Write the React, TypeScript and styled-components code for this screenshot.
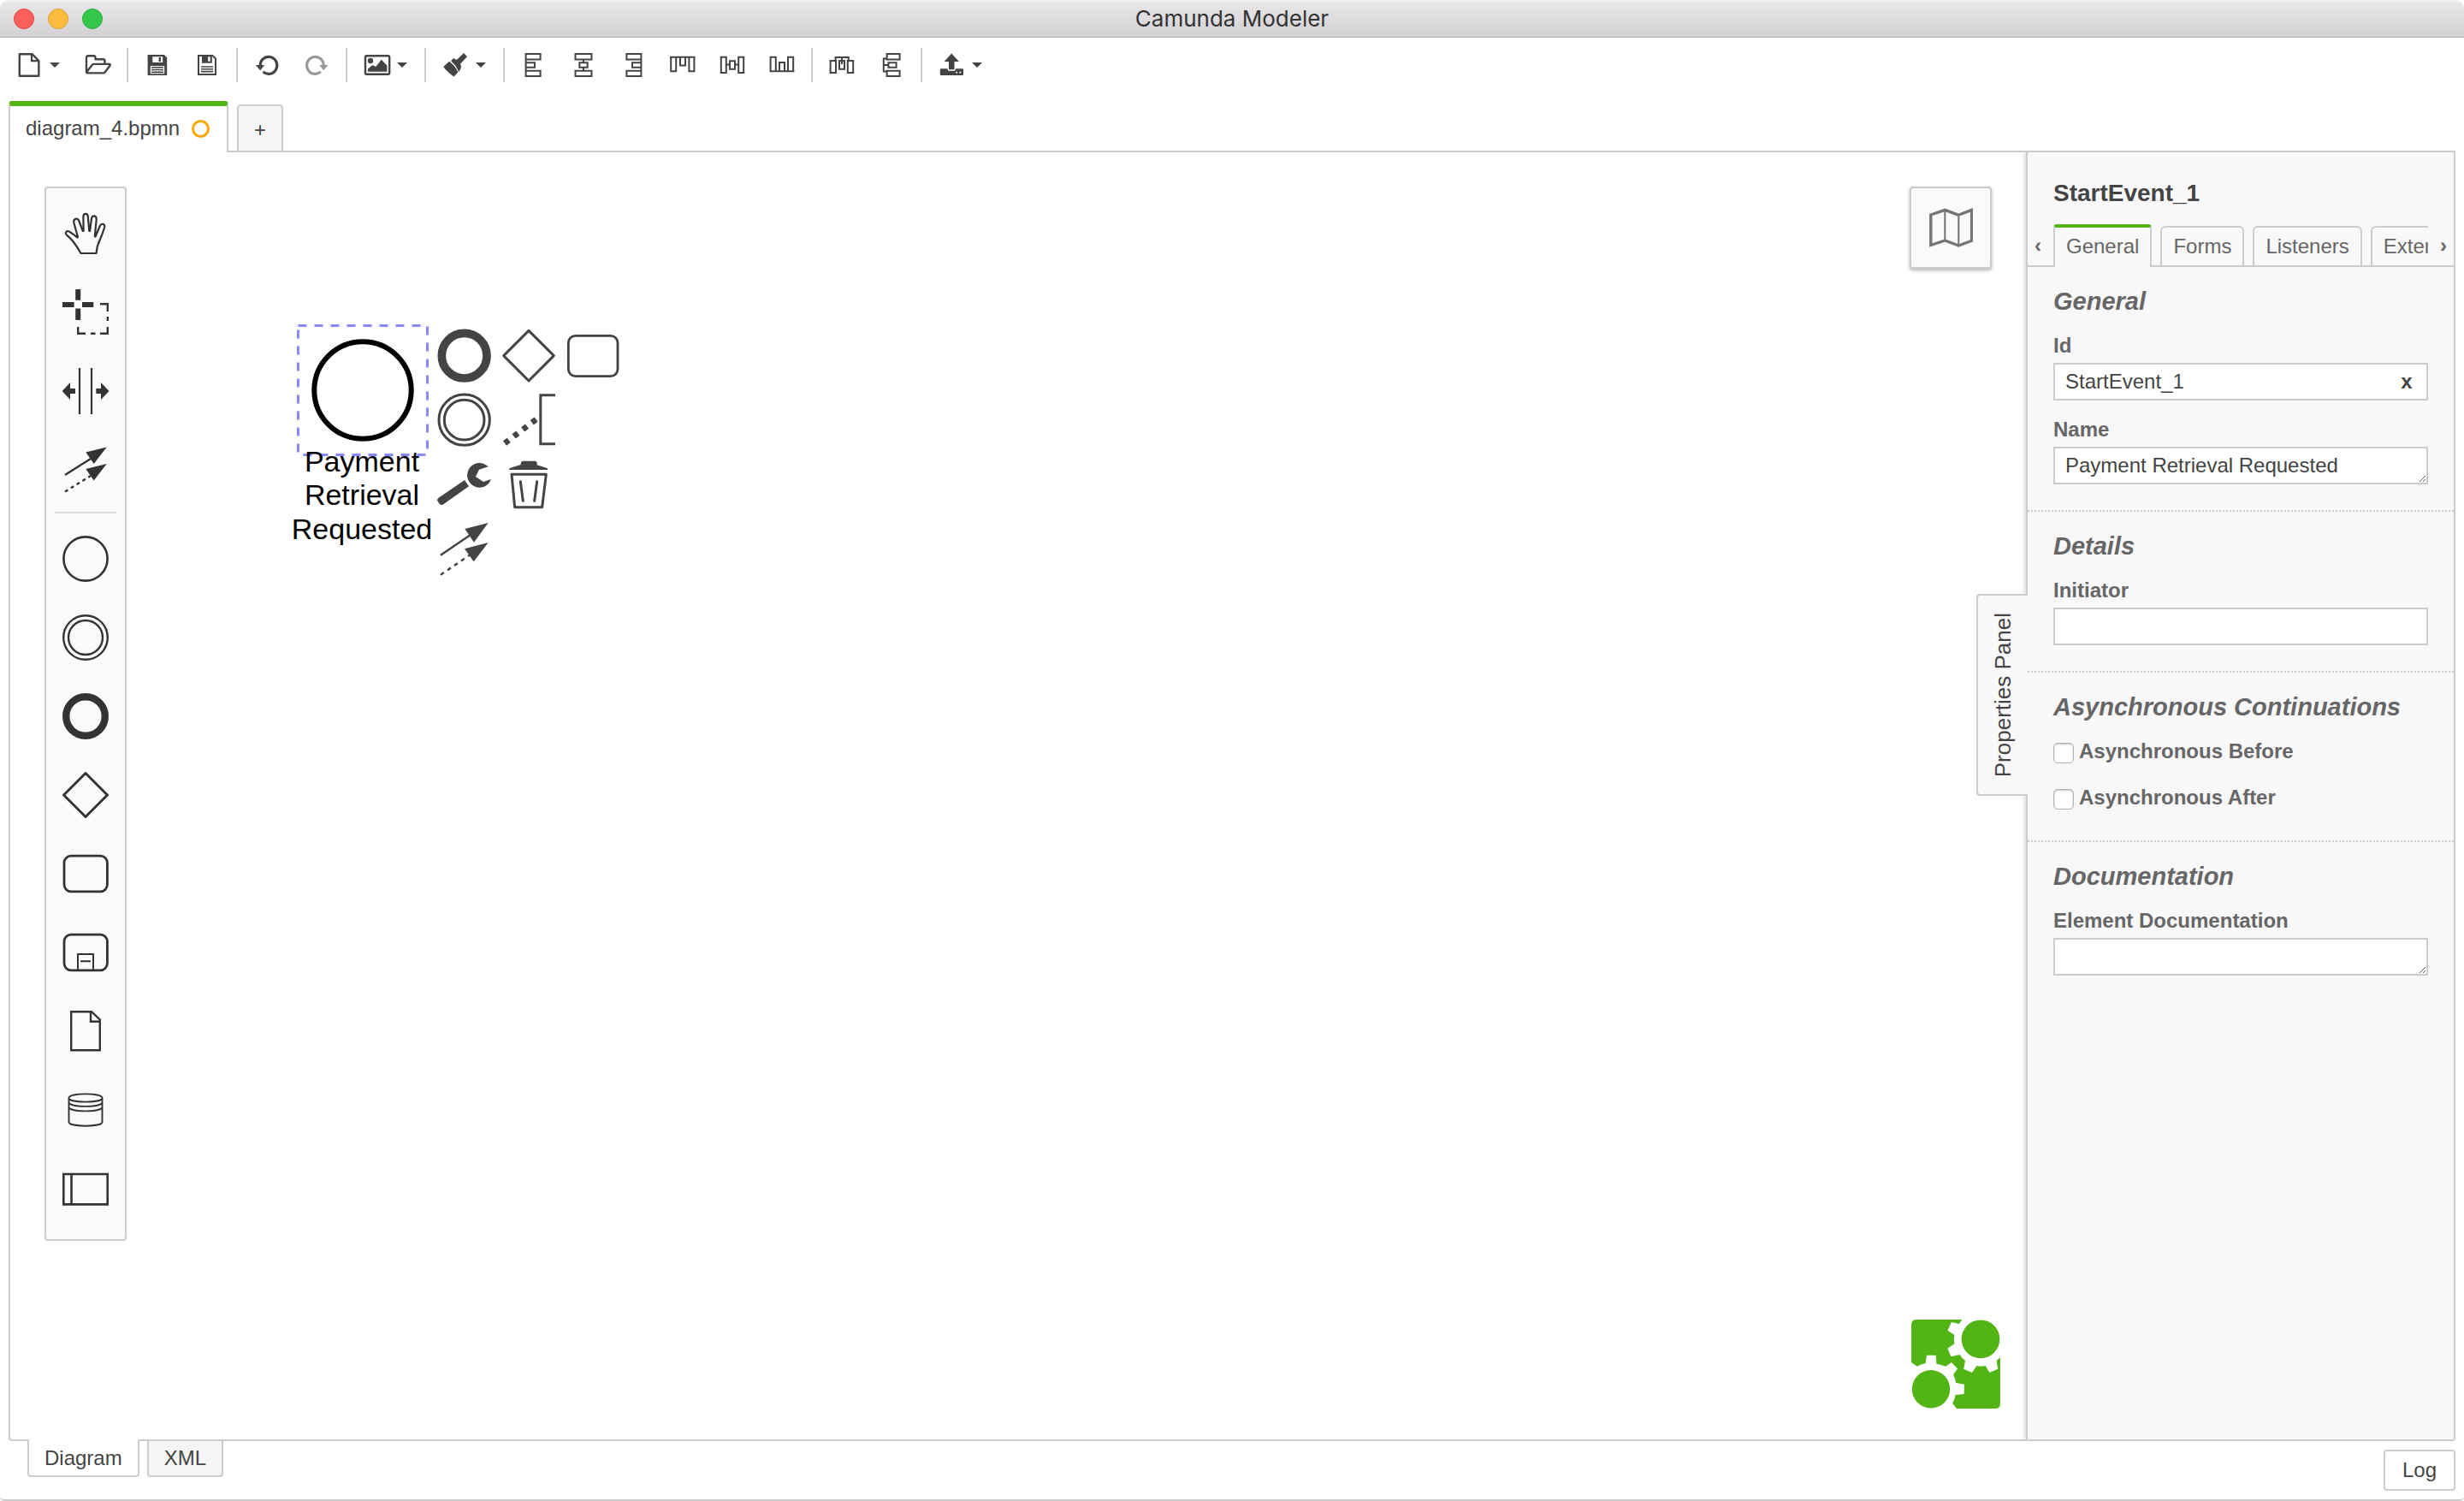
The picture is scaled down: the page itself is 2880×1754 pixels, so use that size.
import React, { useState } from 'react';
import styled, { createGlobalStyle, css } from 'styled-components';

const green = '#52b415';
const line = '#cccccc';
const ink = '#444444';
const muted = '#666666';
const panelBg = '#f8f8f8';
const sans = "'Liberation Sans', Arial, Helvetica, sans-serif";

const GlobalStyle = createGlobalStyle`
  *, *::before, *::after { box-sizing: border-box; }
  body { margin: 0; background: #ffffff; }
  button, input, textarea { font: inherit; color: inherit; margin: 0; padding: 0; border: 0; background: none; }
`;

const Window = styled.div`
  display: flex;
  flex-direction: column;
  height: 100vh;
  font: 24px/28px ${sans};
  color: ${ink};
  border-bottom: 2px solid ${line};
  border-radius: 10px 10px 5px 5px;
  overflow: hidden;
`;

/* ---------- title bar ---------- */

const TitleBar = styled.header`
  display: grid;
  grid-template-columns: 1fr auto 1fr;
  align-items: center;
  height: 44px;
  padding: 0 16px;
  background: linear-gradient(#f4f3f4, #e8e6e9 3px, #d2d0d3);
  border-bottom: 1px solid #b1afb2;
`;

const Lights = styled.div`
  display: flex;
  gap: 16px;
`;

const Light = styled.button<{ $fill: string; $edge: string }>`
  width: 24px;
  height: 24px;
  border-radius: 50%;
  background: ${(p) => p.$fill};
  border: 1px solid ${(p) => p.$edge};
`;

const Title = styled.h1`
  margin: 0;
  padding-top: 1px;
  font: 400 26px/32px Inter, ${sans};
  color: #333333;
`;

/* ---------- toolbar ---------- */

const Toolbar = styled.div`
  display: flex;
  padding: 12px 0 22px;
`;

const ToolGroup = styled.div`
  display: flex;
  height: 40px;
  padding: 0 5px;
  border-right: 2px solid ${line};
  &:last-child { border-right: 0; }
`;

const ToolButton = styled.button`
  display: flex;
  align-items: center;
  gap: 8px;
  padding: 0 13px;
  color: ${ink};
  &:disabled { color: #999999; }
`;

const DropButton = styled(ToolButton)`
  padding-right: 15px;
`;

const ToolSvg = styled.svg`
  width: 32px;
  height: 32px;
  overflow: visible;
  fill: none;
  stroke: currentColor;
  stroke-width: 2;
`;

const CaretSvg = styled.svg`
  width: 12px;
  height: 6px;
  fill: currentColor;
`;

const Caret = () => (
  <CaretSvg viewBox="0 0 12 6"><path d="M0 0H12L6 6Z" /></CaretSvg>
);

type Tool = { name: string; art: React.ReactNode; drop?: boolean; disabled?: boolean };

const solid = { fill: 'currentColor', stroke: 'none' };

const toolGroups: Tool[][] = [
  [
    {
      name: 'New', drop: true, art: (
        <>
          <path strokeWidth="2.4" strokeLinejoin="round" d="M4.8 3.2H19.5L27.3 11V28.8H4.8Z" />
          <path strokeWidth="2.2" d="M19 3.2V11.2H27.3" />
        </>
      ),
    },
    {
      name: 'Open', art: (
        <path strokeWidth="2.4" strokeLinejoin="round" d="M3 25V7.5Q3 5.3 5 5.3H11.5Q13.5 5.3 13.5 7.5V9.3H22.5Q24.5 9.3 24.5 11.3V14.8M2.8 25Q3.2 25.4 5 25.4H22.5Q23.8 25.4 24.8 24.2L30.6 16.5Q31.2 15 29.6 14.9H12Q10.6 14.9 9.6 16L3 24.6" />
      ),
    },
  ],
  [
    {
      name: 'Save', art: (
        <>
          <path {...solid} fillRule="evenodd" d="M4.6 4H24L27.2 7.5V28H4.6ZM10.3 6.3V13H22.2V6.3ZM7.8 17V26.3H24.2V17Z" />
          <path {...solid} d="M17.6 7H20V12H17.6Z" />
          <path strokeWidth="1.6" d="M9 18.8H23M9 21.5H23M9 24.4H23" />
        </>
      ),
    },
    {
      name: 'Save as', art: (
        <>
          <path d="M6 5H22.5L26 8.5V27H6Z" />
          <path {...solid} fillRule="evenodd" d="M10 4H21.8V13.8H10ZM17.2 6.2V11.8H19.6V6.2Z" />
          <path strokeWidth="1.6" d="M9 18H23M9 20.8H23M9 23.6H23" />
        </>
      ),
    },
  ],
  [
    {
      name: 'Undo', art: (
        <>
          <path strokeWidth="3.2" d="M8.2 17.5V16A9.8 10 0 1 1 11.5 23.9" />
          <path {...solid} d="M2.8 16H13.2L8.2 22.2Z" />
        </>
      ),
    },
    {
      name: 'Redo', disabled: true, art: (
        <>
          <path strokeWidth="3.2" d="M24.2 17.5V16A9.8 10 0 1 0 20.9 23.9" />
          <path {...solid} d="M29.6 16H19.2L24.2 22.2Z" />
        </>
      ),
    },
  ],
  [
    {
      name: 'Export as image', drop: true, art: (
        <>
          <rect x="3" y="5.2" width="28.2" height="21.6" rx="1.5" strokeWidth="2.4" />
          <circle {...solid} cx="9" cy="11" r="3.2" />
          <path {...solid} d="M5.9 23.8V20.7L11 16.2Q12 15.8 15.1 18L21.8 9.7L28.4 16.4V23.8Z" />
        </>
      ),
    },
  ],
  [
    {
      name: 'Set color', drop: true, art: (
        <>
          <path {...solid} d="M26 2L30 6.2L21.8 15Q25 18 20 24.2Q18 17 11 11.2L14.3 7.7Q16.5 10.5 18.6 9.3Z" />
          <path {...solid} d="M9 11.7Q16.5 17 19.3 24.6L14.5 29.5Q6 23.5 2.3 17.9Z" />
        </>
      ),
    },
  ],
  [
    {
      name: 'Align left', art: (
        <path d="M6.6 2V30M6.6 3H23.6V9.4H6.6M6.6 13.2H17V18.8H6.6M6.6 22.8H23.6V29H6.6" />
      ),
    },
    {
      name: 'Align center', art: (
        <path d="M6.5 3H25.5V9.4H6.5ZM11.3 13.2H20.7V18.8H11.3ZM6.5 22.8H25.5V29H6.5ZM16 9.4V13.2M16 18.8V22.8" />
      ),
    },
    {
      name: 'Align right', art: (
        <path d="M25.4 2V30M25.4 3H8.4V9.4H25.4M25.4 13.2H15V18.8H25.4M25.4 22.8H8.4V29H25.4" />
      ),
    },
    {
      name: 'Align top', art: (
        <path d="M1 6.8H30.6M2.2 6.8V23.3H8.2V6.8M13 6.8V16.6H19V6.8M23.4 6.8V23.3H29.4V6.8" />
      ),
    },
    {
      name: 'Align middle', art: (
        <path d="M2.8 6.8H8.8V25H2.8ZM13 11.2H19V20.8H13ZM23.2 6.8H29.2V25H23.2ZM8.8 15.6H13M19 15.6H23.2" />
      ),
    },
    {
      name: 'Align bottom', art: (
        <path d="M1.6 23.3H30.4M2.6 23.3V6.8H8.8V23.3M13 23.3V13H19V23.3M23 23.3V6.8H29.2V23.3" />
      ),
    },
  ],
  [
    {
      name: 'Distribute horizontally', art: (
        <path d="M2.6 11H9V25H2.6ZM13 11H19V20.8H13ZM22.8 11H29.2V25H22.8ZM8.6 11V7H23.8V11M16 7V15" />
      ),
    },
    {
      name: 'Distribute vertically', art: (
        <path d="M10.6 3H25.6V9.4H10.6ZM12.4 13.2H21.6V18.8H12.4ZM10.6 22.8H25.6V29H10.6ZM10.6 8.4H6.8V23.6H10.6M6.8 16H12.4" />
      ),
    },
  ],
  [
    {
      name: 'Deploy', drop: true, art: (
        <>
          <path {...solid} fillRule="evenodd" d="M4 20.3H11.6V21.3Q11.6 22.8 13.2 22.8H19.2Q20.8 22.8 20.8 21.3V20.3H28.8Q30 20.3 30 21.5V26.8Q30 28 28.8 28H4Q2.8 28 2.8 26.8V21.5Q2.8 20.3 4 20.3ZM21.3 23.8V25.6H23.1V23.8ZM25.4 23.8V25.6H27.2V23.8Z" />
          <path {...solid} d="M16.2 2.6L25 12H19.5V21.3H13V12H7.5Z" />
        </>
      ),
    },
  ],
];

/* ---------- file tabs ---------- */

const FileTabs = styled.nav`
  display: flex;
  gap: 10px;
  height: 60px;
  margin: 0 10px;
  box-shadow: inset 0 -2px 0 ${line};
`;

const FileTab = styled.button`
  display: flex;
  align-items: center;
  gap: 14px;
  padding: 0 20px 2px 18px;
  border: 2px solid ${line};
  border-top: 6px solid ${green};
  border-bottom: 0;
  border-radius: 4px 4px 0 0;
  background: #ffffff;
`;

const UnsavedDot = styled.span`
  width: 21px;
  height: 21px;
  border: 3px solid #ffa500;
  border-radius: 50%;
`;

const AddTab = styled.button`
  width: 54px;
  margin: 4px 0 2px;
  padding-top: 4px;
  border: 2px solid ${line};
  border-bottom: 0;
  border-radius: 4px 4px 0 0;
  background: #f5f5f5;
`;

/* ---------- workspace ---------- */

const Workspace = styled.main`
  display: flex;
  flex: 1;
  min-height: 0;
  margin: 0 10px;
  border: 2px solid ${line};
  border-top: 0;
  border-radius: 0 0 4px 4px;
`;

const Canvas = styled.section`
  position: relative;
  flex: 1;
  min-width: 0;
`;

const Drawing = styled.svg`
  display: block;
  width: 100%;
  height: 100%;
`;

const Palette = styled.div`
  position: absolute;
  left: 40px;
  top: 40px;
  display: flex;
  flex-direction: column;
  width: 96px;
  padding: 6px 0 13px;
  border: 2px solid ${line};
  border-radius: 4px;
  background: #fafafa;
`;

const PaletteEntry = styled.button`
  display: flex;
  align-items: center;
  justify-content: center;
  height: 92px;
  color: #333333;
`;

const PaletteRule = styled.hr`
  height: 2px;
  margin: 4px 10px 7px;
  border: 0;
  background: #dddddd;
`;

const Glyph = styled.svg`
  display: block;
  width: 64px;
  height: 64px;
  fill: none;
  stroke: currentColor;
`;

const ContextPad = styled.div`
  position: absolute;
  left: 499px;
  top: 206px;
  display: grid;
  grid-template-columns: repeat(3, 64px);
  gap: 11px;
  color: ${ink};
`;

const PadEntry = styled.button<{ $col: number; $row: number }>`
  grid-column: ${(p) => p.$col};
  grid-row: ${(p) => p.$row};
`;

const MapToggle = styled.button`
  position: absolute;
  top: 40px;
  right: 40px;
  display: flex;
  align-items: center;
  justify-content: center;
  width: 96px;
  height: 96px;
  border: 2px solid ${line};
  border-radius: 4px;
  background: #fafafa;
  box-shadow: 0 2px 4px rgba(0, 0, 0, 0.3);
  color: #757575;
`;

const Brand = styled.a`
  position: absolute;
  right: 30px;
  bottom: 36px;
  svg { display: block; fill: ${green}; }
`;

const PanelToggle = styled.button`
  position: absolute;
  right: -2px;
  top: 516px;
  z-index: 1;
  width: 60px;
  height: 236px;
  border: 2px solid ${line};
  border-right: 0;
  border-radius: 4px 0 0 4px;
  background: ${panelBg};
  display: flex;
  align-items: center;
  justify-content: center;
  font-size: 26px;
  line-height: 30px;
  span { writing-mode: vertical-rl; transform: rotate(180deg); }
`;

/* ---------- properties panel ---------- */

const Panel = styled.aside`
  width: 500px;
  border-left: 2px solid ${line};
  background: ${panelBg};
  box-shadow: 0 0 6px rgba(0, 0, 0, 0.25);
  clip-path: inset(0 0 0 -8px);
  color: ${muted};
`;

const PanelTitle = styled.h2`
  margin: 0;
  padding: 32px 30px 20px;
  font-size: 28px;
  line-height: 32px;
  color: ${ink};
`;

const TabBar = styled.div`
  display: grid;
  grid-template-columns: 30px 1fr 30px;
  height: 50px;
  box-shadow: inset 0 -2px 0 ${line};
`;

const Scroller = styled.div`
  display: flex;
  gap: 10px;
  overflow: hidden;
`;

const ScrollArrow = styled.button`
  font-weight: 700;
  &:first-child { padding-right: 6px; }
  &:last-child { padding-left: 6px; }
`;

const PanelTab = styled.button<{ $active: boolean }>`
  flex: none;
  padding: 0 13px;
  border: 2px solid ${line};
  border-bottom: 0;
  border-radius: 6px 6px 0 0;
  margin: 2px 0;
  background: ${panelBg};
  ${(p) => p.$active && css`
    margin: 0;
    padding: 0 13px 2px;
    border-top: 4px solid ${green};
    border-radius: 4px 4px 0 0;
  `}
`;

const Group = styled.section`
  display: flex;
  flex-direction: column;
  padding: 24px 30px 30px;
  & + & { border-top: 2px dotted ${line}; }
`;

const GroupTitle = styled.h3`
  margin: 0 0 22px;
  font-size: 29px;
  font-style: italic;
  line-height: 32px;
`;

const Fields = styled.div`
  display: flex;
  flex-direction: column;
  gap: 20px;
`;

const Field = styled.div`
  display: flex;
  flex-direction: column;
  gap: 6px;
`;

const Label = styled.label`
  font-weight: 700;
`;

const box = css`
  height: 44px;
  border: 2px solid ${line};
  background: #ffffff;
  color: ${ink};
`;

const InputBox = styled.div`
  ${box}
  display: flex;
  align-items: center;
`;

const TextInput = styled.input`
  flex: 1;
  min-width: 0;
  height: 100%;
  padding: 0 12px;
`;

const Clear = styled.button`
  width: 46px;
  font-weight: 700;
`;

const TextArea = styled.textarea`
  && { ${box} padding: 6px 12px; }
  resize: vertical;
  overflow: hidden;
`;

const CheckRow = styled.div`
  display: flex;
  align-items: flex-start;
  gap: 6px;
  height: 34px;
`;

const Check = styled.input`
  && {
    appearance: none;
    width: 24px;
    height: 24px;
    margin-top: 4px;
    border: 1px solid #b0b0b0;
    border-radius: 5px;
    background: #ffffff;
    box-shadow: inset 0 1px 2px rgba(0, 0, 0, 0.25);
  }
`;

/* ---------- footer ---------- */

const Footer = styled.footer`
  position: relative;
  display: flex;
  align-items: flex-start;
  height: 70px;
  margin-top: -2px;
  padding: 0 10px 0 32px;
`;

const ViewTab = styled.button<{ $active: boolean }>`
  height: ${(p) => (p.$active ? 44 : 42)}px;
  margin: ${(p) => (p.$active ? 0 : 2)}px 9px 0 0;
  padding: ${(p) => (p.$active ? 2 : 0)}px 18px 0;
  border: 2px solid ${line};
  border-top: 0;
  border-radius: 0 0 4px 4px;
  background: ${(p) => (p.$active ? '#ffffff' : '#f5f5f5')};
`;

const LogButton = styled.button`
  width: 84px;
  height: 48px;
  margin: 12px 0 0 auto;
  border: 2px solid ${line};
  border-radius: 4px;
  background: #ffffff;
`;

/* ---------- drawings ---------- */

const paletteTools = [
  {
    name: 'Hand tool', art: (
      <path strokeWidth="2.2" strokeLinejoin="round" d="M26.5 56H44.5C45 49 47 43.5 49.5 38.5C51.5 34 52.8 30 54.2 25.5C55 21.5 50.5 20.3 48.8 24L43.5 36.5L42.8 36L44.7 16.5C44.8 11.5 39.6 11 39 15.5L37 30H36.3L34.8 13C34.5 8.8 29.7 8.8 29.4 13L29.6 30H28.8L24.5 18.5C22.5 13.5 17.3 15.8 18.4 20.5L23 37L22.3 37.5C18.5 34.5 15 31.5 12 30.3C9 29.4 7.8 33 10.3 35C16.5 39.5 22 48 26.5 56Z" />
    ),
  },
  {
    name: 'Lasso tool', art: (
      <>
        <path strokeWidth="6" d="M5 24H18.6M28 24H41.3M23.2 6V18.7M23.2 28.5V42" />
        <path strokeWidth="2.4" d="M49 23.2H57.8V32M57.8 38V43M57.8 50V57.8H49M43.5 57.8H38M32 57.8H23.2V50" />
      </>
    ),
  },
  {
    name: 'Space tool', art: (
      <>
        <path strokeWidth="2.2" d="M25 6V60M39 6V60" />
        <path {...solid} d="M4.7 33L14 23V30H20V36H14V43ZM59.5 33L50 23V30H44.3V36H50V43Z" />
      </>
    ),
  },
  {
    name: 'Connect tool', art: (
      <>
        <path strokeWidth="2.4" d="M8 39L38 20" />
        <path strokeWidth="2.4" strokeDasharray="4 4" d="M8 58.5L38 40" />
        <path {...solid} d="M56.7 6.4L32.3 12.6L41.7 26ZM56.7 26L32.3 32L41.7 45.6Z" />
      </>
    ),
  },
];

const circle = <circle cx="32" cy="32" r="25.6" strokeWidth="2.6" />;
const doubleCircle = (
  <>
    <circle cx="32" cy="32" r="25.8" strokeWidth="2.4" />
    <circle cx="32" cy="32" r="20" strokeWidth="2.4" />
  </>
);
const thickCircle = <circle cx="32" cy="32" r="22.8" strokeWidth="8.4" />;
const diamond = <path strokeWidth="3" strokeLinejoin="round" d="M32 6.5L57.5 32L32 57.5L6.5 32Z" />;
const task = <rect x="7" y="11.2" width="50.4" height="41.6" rx="8" strokeWidth="2.8" />;

const paletteShapes = [
  { name: 'Start event', art: circle },
  { name: 'Intermediate event', art: doubleCircle },
  { name: 'End event', art: thickCircle },
  { name: 'Gateway', art: diamond },
  { name: 'Task', art: task },
  {
    name: 'Sub process', art: (
      <>
        {task}
        <path strokeWidth="2" d="M23 52V34H41V52M26 42.3H38" />
      </>
    ),
  },
  {
    name: 'Data object', art: (
      <path strokeWidth="2.4" d="M15.2 9.2H39L48.8 18.5V54.3H15.2ZM38 9.2V20.8H48.8" />
    ),
  },
  {
    name: 'Data store', art: (
      <path strokeWidth="1.9" d="M12.5 18C12.5 11.8 51.5 11.8 51.5 18C51.5 24.2 12.5 24.2 12.5 18V46C12.5 52.3 51.5 52.3 51.5 46V18M12.5 23C12.5 29.5 51.5 29.5 51.5 23M12.5 28.5C12.5 35 51.5 35 51.5 28.5" />
    ),
  },
  {
    name: 'Participant', art: (
      <path strokeWidth="2.6" d="M6.3 15H57.7V50.4H6.3ZM15.5 15V50.4" />
    ),
  },
];

const padEntries = [
  { name: 'Append end event', col: 1, row: 1, art: <circle cx="95" cy="95" r="79" strokeWidth="29" /> },
  { name: 'Append gateway', col: 2, row: 1, art: <path strokeWidth="9" strokeLinejoin="round" d="M96 7L184 95L96 183L8 95Z" /> },
  { name: 'Append task', col: 3, row: 1, art: <rect x="10" y="25" width="173" height="142" rx="25" strokeWidth="8.5" /> },
  {
    name: 'Append intermediate event', col: 1, row: 2, art: (
      <>
        <circle cx="95" cy="95" r="89" strokeWidth="9" />
        <circle cx="95" cy="95" r="70" strokeWidth="9" />
      </>
    ),
  },
  {
    name: 'Append text annotation', col: 2, row: 2, art: (
      <>
        <path strokeWidth="9" d="M189 8H137.5V179H189" />
        <path strokeWidth="20" strokeDasharray="18 22" d="M12 177L126 90" />
      </>
    ),
  },
  {
    name: 'Change type', col: 1, row: 3, art: (
      <>
        <path {...solid} d="M96 81L111 103L23 165Q14 171 8 164L1 154Q-1 147 5 143Z" />
        <path {...solid} d="M179 34A43 43 0 1 0 189 78L162 87L135 69L147 44Z" />
      </>
    ),
  },
  {
    name: 'Remove', col: 2, row: 3, art: (
      <>
        <path {...solid} d="M28 45V40L68 27V22Q69 14 76 14H117Q125 14 125 22V28L162 40V45Z" />
        <path strokeWidth="9" strokeLinejoin="round" d="M36 61H157L143 176H47Z" />
        <path strokeWidth="9" strokeLinecap="round" d="M67 86L76 154M125 86L116 154" />
      </>
    ),
  },
  {
    name: 'Connect', col: 1, row: 4, art: (
      <>
        <path strokeWidth="7.5" d="M12 119L120 46" />
        <path strokeWidth="7.5" strokeDasharray="14 15" d="M12 188L120 115" />
        <path {...solid} d="M179 6L97 27L129 74ZM179 75L96 97L128 142Z" />
      </>
    ),
  },
];

const labelLines = [
  { text: 'Payment', y: 373 },
  { text: 'Retrieval', y: 412 },
  { text: 'Requested', y: 452 },
];
const panelTabs = ['General', 'Forms', 'Listeners', 'Extensions'];

export default function App() {
  const [tab, setTab] = useState('General');
  const [id, setId] = useState('StartEvent_1');
  const [name, setName] = useState('Payment Retrieval Requested');

  return (
    <>
      <GlobalStyle />
      <Window>
        <TitleBar>
          <Lights>
            <Light aria-label="Close" $fill="#fc605c" $edge="#e0443e" />
            <Light aria-label="Minimize" $fill="#fdbc40" $edge="#dea035" />
            <Light aria-label="Zoom" $fill="#34c84a" $edge="#27aa35" />
          </Lights>
          <Title>Camunda Modeler</Title>
        </TitleBar>

        <Toolbar>
          {toolGroups.map((group, i) => (
            <ToolGroup key={i}>
              {group.map((tool) => {
                const Button = tool.drop ? DropButton : ToolButton;
                return (
                  <Button key={tool.name} aria-label={tool.name} disabled={tool.disabled}>
                    <ToolSvg viewBox="0 0 32 32">{tool.art}</ToolSvg>
                    {tool.drop && <Caret />}
                  </Button>
                );
              })}
            </ToolGroup>
          ))}
        </Toolbar>

        <FileTabs>
          <FileTab>diagram_4.bpmn<UnsavedDot /></FileTab>
          <AddTab>+</AddTab>
        </FileTabs>

        <Workspace>
          <Canvas>
            <Drawing>
              <circle cx="412" cy="278" r="56.7" fill="#ffffff" stroke="#000000" strokeWidth="6" />
              <rect x="336.5" y="202.5" width="151" height="151" fill="none" stroke="#8888ff" strokeWidth="3" strokeDasharray="10 9" />
              {labelLines.map(({ text, y }) => (
                <text key={text} x="411" y={y} fontSize="34" textAnchor="middle" fill="#000000">{text}</text>
              ))}
            </Drawing>

            <Palette>
              {paletteTools.map((entry) => (
                <PaletteEntry key={entry.name} aria-label={entry.name}>
                  <Glyph viewBox="0 0 64 64">{entry.art}</Glyph>
                </PaletteEntry>
              ))}
              <PaletteRule />
              {paletteShapes.map((entry) => (
                <PaletteEntry key={entry.name} aria-label={entry.name}>
                  <Glyph viewBox="0 0 64 64">{entry.art}</Glyph>
                </PaletteEntry>
              ))}
            </Palette>

            <ContextPad>
              {padEntries.map((entry) => (
                <PadEntry key={entry.name} aria-label={entry.name} $col={entry.col} $row={entry.row}>
                  <Glyph viewBox="0 0 192 192">{entry.art}</Glyph>
                </PadEntry>
              ))}
            </ContextPad>

            <MapToggle aria-label="Toggle minimap">
              <svg width="52" height="46" viewBox="0 0 52 46" fill="none" stroke="currentColor">
                <path strokeWidth="3.4" d="M2.8 8L19.3 2.3L35.3 8.3L50.6 2.3V38.3L35.3 44L19.3 38L2.8 43.5Z" />
                <path strokeWidth="2" d="M19.3 3V38M35.3 8V43" />
              </svg>
            </MapToggle>

            <Brand href="#" aria-label="bpmn.io">
              <svg width="104" height="104" viewBox="0 0 104 104">
                <path d="M6 0H59.4L55.8 5L46.9 3L42.4 12.7L50.4 18Q49.6 23 50.4 28.3L42.4 33.7L46.4 43.3L56.7 41Q59 45 63 48L61.2 57.7L71 62L76.3 54Q81 55 86.6 54L91.5 62L101.3 57.7L99.6 48L104 44.3V98Q104 104 98 104H53.1L48.2 98Q50.8 93 51.5 88L61.6 87L62 75.7L52.2 74Q51.5 69 49.1 64.3L54 57.3L46.9 50L40.2 54.7Q35 52.5 29.5 51.7L28.6 41.7H17.9L16.5 51.3Q11 52.3 6.7 54.7L0 50V6Q0 0 6 0Z" />
                <circle cx="81" cy="22.8" r="22.4" />
                <circle cx="23" cy="81.2" r="22.2" />
              </svg>
            </Brand>

            <PanelToggle><span>Properties Panel</span></PanelToggle>
          </Canvas>

          <Panel>
            <PanelTitle>StartEvent_1</PanelTitle>
            <TabBar>
              <ScrollArrow aria-label="Scroll tabs left">‹</ScrollArrow>
              <Scroller>
                {panelTabs.map((label) => (
                  <PanelTab key={label} $active={label === tab} onClick={() => setTab(label)}>{label}</PanelTab>
                ))}
              </Scroller>
              <ScrollArrow aria-label="Scroll tabs right">›</ScrollArrow>
            </TabBar>

            <Group>
              <GroupTitle>General</GroupTitle>
              <Fields>
                <Field>
                  <Label htmlFor="element-id">Id</Label>
                  <InputBox>
                    <TextInput id="element-id" value={id} onChange={(e) => setId(e.target.value)} />
                    <Clear aria-label="Clear id" onClick={() => setId('')}>x</Clear>
                  </InputBox>
                </Field>
                <Field>
                  <Label htmlFor="element-name">Name</Label>
                  <TextArea id="element-name" rows={1} value={name} onChange={(e) => setName(e.target.value)} />
                </Field>
              </Fields>
            </Group>

            <Group>
              <GroupTitle>Details</GroupTitle>
              <Field>
                <Label htmlFor="initiator">Initiator</Label>
                <InputBox><TextInput id="initiator" /></InputBox>
              </Field>
            </Group>

            <Group>
              <GroupTitle>Asynchronous Continuations</GroupTitle>
              <Fields>
                <CheckRow>
                  <Check type="checkbox" id="async-before" />
                  <Label htmlFor="async-before">Asynchronous Before</Label>
                </CheckRow>
                <CheckRow>
                  <Check type="checkbox" id="async-after" />
                  <Label htmlFor="async-after">Asynchronous After</Label>
                </CheckRow>
              </Fields>
            </Group>

            <Group>
              <GroupTitle>Documentation</GroupTitle>
              <Field>
                <Label htmlFor="documentation">Element Documentation</Label>
                <TextArea id="documentation" rows={1} />
              </Field>
            </Group>
          </Panel>
        </Workspace>

        <Footer>
          <ViewTab $active>Diagram</ViewTab>
          <ViewTab $active={false}>XML</ViewTab>
          <LogButton>Log</LogButton>
        </Footer>
      </Window>
    </>
  );
}
